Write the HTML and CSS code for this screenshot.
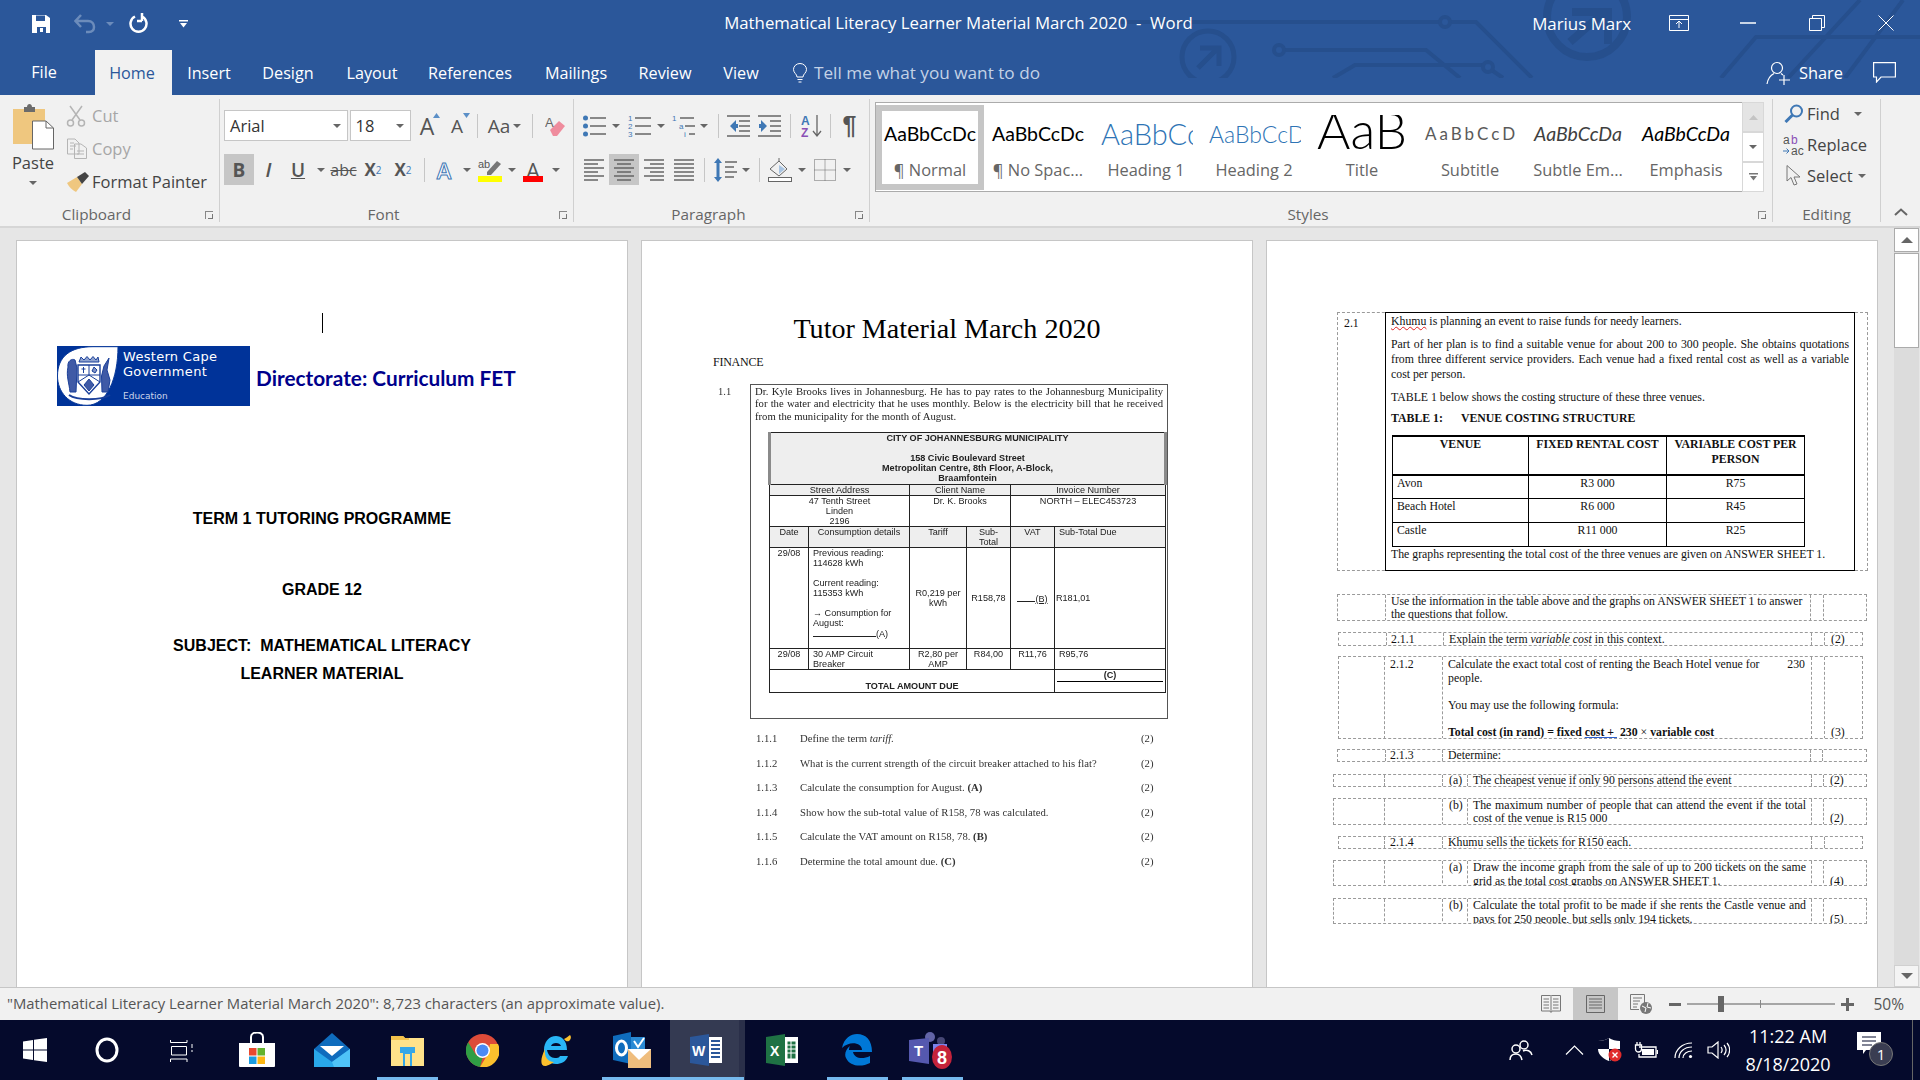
FILE: index.html
```html
<!DOCTYPE html>
<html lang="en">
<head>
<meta charset="utf-8">
<title>Mathematical Literacy Learner Material March 2020 - Word</title>
<link rel="stylesheet" href="styles.css">
</head>
<body>
<div class="app">
  <header class="top">
    <svg class="circuit" width="820" height="78" viewBox="1100 0 820 78" fill="none" stroke="#264f8d" stroke-width="4">
      <path d="M1100 22H1440M1450 22H1476L1532 78M1284 50H1426L1460 78M1333 78L1355 65H1483M1493 71L1503 78"/>
      <circle cx="1445" cy="22" r="5"/><circle cx="1279" cy="50" r="5"/><circle cx="1488" cy="67" r="5"/>
      <circle cx="1587" cy="17" r="40" stroke-width="8"/>
      <path d="M1570 42L1602 14M1572 12H1608V44" stroke-width="8"/>
      <circle cx="1208" cy="57" r="26" stroke-width="5"/>
      <path d="M1198 68L1216 50M1200 48H1219V66" stroke-width="5"/>
      <path d="M1721 78L1756 37H1920M1788 78L1860 0M1845 78L1903 0"/>
    </svg>
    <div class="titlebar">
      <div class="qat">
        <span class="b w38"><svg width="20" height="20" viewBox="0 0 20 20"><path d="M1 1H15L19 4V19H1Z" fill="#fff"/><path d="M5 1.500H14V7H5ZM6 13H15V19H6Z" fill="#2b579a"/><path d="M9 14H12V18H9Z" fill="#fff"/></svg></span>
        <span class="b w30 ml10"><svg width="22" height="20" viewBox="0 0 22 20" fill="none" stroke="#6c8cbb" stroke-width="2.500"><path d="M2 7H14C18 7 20 10 20 13C20 16 18 18 15 18H12M7 1L1.500 7L7 13"/></svg></span>
        <span class="b w20"><i class="arr dim"></i></span>
        <span class="b w30 ml4"><svg width="20" height="22" viewBox="0 0 20 22" fill="none" stroke="#fff" stroke-width="2.500"><path d="M13 3.500A8 8 0 1 1 6 3.500M13 0V8M13 8H8" /></svg></span>
        <span class="b w30 ml14"><svg width="9" height="8" viewBox="0 0 9 8"><path d="M0 0H9V1.500H0ZM1 3H8L4.500 7.500Z" fill="#fff"/></svg></span>
      </div>
      <div class="doc-title">Mathematical Literacy Learner Material March 2020&nbsp; -&nbsp; Word</div>
      <div class="win">
        <span class="user">Marius Marx</span>
        <span class="b w69"><svg width="20" height="16" viewBox="0 0 20 16" fill="none" stroke="#fff"><path d="M.5.500H19.500V15.500H.5ZM.5 4.500H19.500M10 13V6.500M7 9L10 6L13 9"/></svg></span>
        <span class="b w69"><svg width="16" height="2" viewBox="0 0 16 2"><path d="M0 1H16" stroke="#fff" stroke-width="1.500"/></svg></span>
        <span class="b w69"><svg width="16" height="16" viewBox="0 0 16 16" fill="none" stroke="#fff"><path d="M.5 3.500H12.500V15.500H.5ZM3.500 3.500V.5H15.500V12.500H12.500"/></svg></span>
        <span class="b w69"><svg width="16" height="16" viewBox="0 0 16 16" fill="none" stroke="#fff"><path d="M.5.5L15.500 15.500M15.500.5L.5 15.500"/></svg></span>
      </div>
    </div>
    <nav class="tabs">
      <div class="tabgrid">
        <span class="tab tab-file">File</span>
        <span class="tab tab-on">Home</span>
        <span class="tab">Insert</span>
        <span class="tab">Design</span>
        <span class="tab">Layout</span>
        <span class="tab">References</span>
        <span class="tab">Mailings</span>
        <span class="tab">Review</span>
        <span class="tab">View</span>
      </div>
      <div class="tellme">
        <svg width="16" height="20" viewBox="0 0 16 20" fill="none" stroke="#fff"><path d="M5 14C5 11 1.500 10 1.500 6.500A6.500 6 0 0 1 14.500 6.500C14.500 10 11 11 11 14ZM5.500 16.500H10.500M6.500 19H9.500"/></svg>
        <span>Tell me what you want to do</span>
      </div>
      <div class="share">
        <svg width="24" height="24" viewBox="0 0 24 24" fill="none" stroke="#fff" stroke-width="1.200"><circle cx="11" cy="7" r="5.500"/><path d="M1 23C2 17 5 14 8 12.500M15 12.500L17 14M18 14V24M13 19H24"/></svg>
        <span class="share-t">Share</span>
        <svg class="cmt" width="23" height="21" viewBox="0 0 23 21" fill="none" stroke="#fff" stroke-width="1.200"><path d="M.6.6H22.400V15H8L3.500 20V15H.6Z"/></svg>
      </div>
    </nav>
  </header>

  <section class="ribbon">
    <div class="group g-clip">
      <div class="clip-body">
        <div class="paste">
          <svg width="42" height="47" viewBox="0 0 42 47"><path d="M1 6H33V41H1Z" fill="#efc77f" rx="2"/><path d="M12 4H15C15 0 20 0 20 4H23V9H12Z" fill="#6b6b6b"/><path d="M20.500 18H34L41.500 25V46H20.500Z" fill="#fff" stroke="#666"/><path d="M34 18V25H41.500" fill="none" stroke="#666"/></svg>
          <span class="paste-t">Paste</span>
          <i class="arr mt8"></i>
        </div>
        <div class="clip-list">
          <div class="cl off"><span class="cl-i"><svg width="20" height="22" viewBox="0 0 20 22" fill="none" stroke="#b5b5b5" stroke-width="1.500"><path d="M4 1L14 15M16 1L6 15"/><circle cx="4.500" cy="18" r="3"/><circle cx="15.500" cy="18" r="3"/></svg></span>Cut</div>
          <div class="cl off"><span class="cl-i"><svg width="22" height="21" viewBox="0 0 22 21" fill="none" stroke="#b5b5b5"><path d="M1.500 1H9L13 5V16H1.500ZM8.500 6H15L20.500 10V20.500H8.500ZM4 5H8M4 8H10M4 11H7M11 13H18M11 16H18"/></svg></span>Copy</div>
          <div class="cl"><span class="cl-i"><svg width="24" height="22" viewBox="0 0 24 22"><path d="M1 12L11 6L16 13L10 21C6 19 3 16 1 12Z" fill="#efc77f"/><path d="M11 6L19 1L23 5L16 13Z" fill="#444"/></svg></span>Format Painter</div>
        </div>
      </div>
      <div class="glabel gl-pad">Clipboard<i class="launch"></i></div>
    </div>

    <div class="group g-font">
      <div class="rows">
        <div class="row">
          <span class="combo c-font">Arial<i class="arr"></i></span>
          <span class="combo c-size">18<i class="arr"></i></span>
          <span class="b w30 big">A<svg class="sup" width="7" height="5" viewBox="0 0 7 5"><path d="M0 5L3.500 0L7 5Z" fill="#5b8fc7"/></svg></span>
          <span class="b w30 big sm">A<svg class="sup" width="7" height="5" viewBox="0 0 7 5"><path d="M0 0L3.500 5L7 0Z" fill="#5b8fc7"/></svg></span>
          <span class="b w10"><i class="sep"></i></span>
          <span class="b w45 aa">Aa<i class="arr ml3"></i></span>
          <span class="b w10"><i class="sep"></i></span>
          <span class="b w36"><svg width="20" height="22" viewBox="0 0 20 22"><path d="M5 15L14 6L20 11L12 21H8Z" fill="#ef8c9d"/><text x="0" y="12" font-family="Liberation Sans" font-size="13" fill="#666">A</text></svg></span>
        </div>
        <div class="row">
          <span class="b w30 on fmt bold">B</span>
          <span class="b w29 fmt ital">I</span>
          <span class="b w30 fmt under">U</span>
          <span class="b w16"><i class="arr"></i></span>
          <span class="b w29 fmt abc">abc</span>
          <span class="b w30 fmt xs">X<sub>2</sub></span>
          <span class="b w30 fmt xs">X<sup>2</sup></span>
          <span class="b w12"><i class="sep"></i></span>
          <span class="b w28 fx">A</span>
          <span class="b w17"><i class="arr"></i></span>
          <span class="b w30"><svg width="26" height="24" viewBox="0 0 26 24"><text x="1" y="10" font-family="Liberation Sans" font-size="11" fill="#555">ab</text><path d="M10 14L20 3L24 6L14 17L10 17Z" fill="#777"/><rect x="1" y="18" width="24" height="6" fill="#ff0"/></svg></span>
          <span class="b w13"><i class="arr"></i></span>
          <span class="b w30 colorA">A</span>
          <span class="b w16"><i class="arr"></i></span>
        </div>
      </div>
      <div class="glabel gl-pad">Font<i class="launch"></i></div>
    </div>

    <div class="group g-para">
      <div class="rows">
        <div class="row r-ind">
          <span class="b w23"><svg width="23" height="22" viewBox="0 0 23 22" fill="none" stroke="#666" stroke-width="1.500"><path d="M7 3H23M7 11H23M7 19H23"/><circle cx="2.500" cy="3" r="2.500" fill="#3f78b5" stroke="none"/><circle cx="2.500" cy="11" r="2.500" fill="#3f78b5" stroke="none"/><circle cx="2.500" cy="19" r="2.500" fill="#3f78b5" stroke="none"/></svg></span>
          <span class="b w20"><i class="arr"></i></span>
          <span class="b w27"><svg width="23" height="22" viewBox="0 0 23 22" fill="none"><path d="M7 3H23M7 11H23M7 19H23" stroke="#666" stroke-width="1.500"/><text x="0" y="6" class="mini">1</text><text x="0" y="14" class="mini">2</text><text x="0" y="22" class="mini">3</text></svg></span>
          <span class="b w16"><i class="arr"></i></span>
          <span class="b w30"><svg width="24" height="22" viewBox="0 0 24 22" fill="none"><path d="M8 3H22M13 11H23M17 19H23" stroke="#666" stroke-width="1.500"/><text x="0" y="6" class="mini">1</text><text x="7" y="14" class="mini">a</text><text x="12" y="22" class="mini">i</text></svg></span>
          <span class="b w10"><i class="arr"></i></span>
          <span class="b w18"><i class="sep"></i></span>
          <span class="b w31 jl"><svg width="23" height="22" viewBox="0 0 23 22" fill="none" stroke="#666" stroke-width="1.500"><path d="M0 1H23M12 6H23M12 11H23M12 16H23M0 21H23"/><path d="M9 5L3 11L9 17V13H11V9H9Z" fill="#3f78b5" stroke="none"/></svg></span>
          <span class="b w23"><svg width="23" height="22" viewBox="0 0 23 22" fill="none" stroke="#666" stroke-width="1.500"><path d="M0 1H23M12 6H23M12 11H23M12 16H23M0 21H23"/><path d="M3 5L9 11L3 17V13H1V9H3Z" fill="#3f78b5" stroke="none"/></svg></span>
          <span class="b w18"><i class="sep"></i></span>
          <span class="b w25"><svg width="22" height="24" viewBox="0 0 22 24" fill="none"><text x="0" y="11" font-family="Liberation Sans" font-weight="700" font-size="12" fill="#3f78b5">A</text><text x="0" y="23" font-family="Liberation Sans" font-weight="700" font-size="12" fill="#8a4fb5">Z</text><path d="M16 1V21M12 17L16 22L20 17" stroke="#666" stroke-width="1.300"/></svg></span>
          <span class="b w12"><i class="sep"></i></span>
          <span class="b w27 pil">¶</span>
        </div>
        <div class="row">
          <span class="b w30"><svg width="20" height="22" viewBox="0 0 20 22" fill="none" stroke="#666" stroke-width="1.300"><path d="M0 1H20M0 5H14M0 9H20M0 13H14M0 17H20M0 21H14"/></svg></span>
          <span class="b w30 on"><svg width="20" height="22" viewBox="0 0 20 22" fill="none" stroke="#666" stroke-width="1.300"><path d="M0 1H20M3 5H17M0 9H20M3 13H17M0 17H20M3 21H17"/></svg></span>
          <span class="b w29"><svg width="20" height="22" viewBox="0 0 20 22" fill="none" stroke="#666" stroke-width="1.300"><path d="M0 1H20M6 5H20M0 9H20M6 13H20M0 17H20M6 21H20"/></svg></span>
          <span class="b w31"><svg width="20" height="22" viewBox="0 0 20 22" fill="none" stroke="#666" stroke-width="1.300"><path d="M0 1H20M0 5H20M0 9H20M0 13H20M0 17H20M0 21H20"/></svg></span>
          <span class="b w10"><i class="sep"></i></span>
          <span class="b w32"><svg width="23" height="24" viewBox="0 0 23 24" fill="none"><path d="M11 4H23M11 9H20M11 14H23M11 19H20" stroke="#666" stroke-width="1.300"/><path d="M4 0L8 5H5.500V19H8L4 24L0 19H2.500V5H0Z" fill="#3f78b5"/></svg></span>
          <span class="b w10"><i class="arr"></i></span>
          <span class="b w16"><i class="sep"></i></span>
          <span class="b w26"><svg width="24" height="24" viewBox="0 0 24 24" fill="none" stroke="#666"><path d="M2 11L11 3L19 11L11 18ZM11 3V0"/><path d="M11 7L17 11L11 16Z" fill="#a8c4e2" stroke="none"/><rect x=".5" y="19.500" width="23" height="4" fill="#fff"/></svg></span>
          <span class="b w18"><i class="arr"></i></span>
          <span class="b w28"><svg width="22" height="22" viewBox="0 0 22 22" fill="none" stroke="#666" stroke-dasharray="1 1"><path d="M.5.5H21.500V21.500H.5ZM11 .5V21.500M.5 11H21.500"/></svg></span>
          <span class="b w16"><i class="arr"></i></span>
        </div>
      </div>
      <div class="glabel gl-pad">Paragraph<i class="launch"></i></div>
    </div>

    <div class="group g-styles">
      <div class="gallery">
        <div class="style sel"><div class="pv pv-n">AaBbCcDc</div><div class="sl">¶ Normal</div></div>
        <div class="style"><div class="pv pv-n">AaBbCcDc</div><div class="sl">¶ No Spac...</div></div>
        <div class="style"><div class="pv pv-h1">AaBbCc</div><div class="sl">Heading 1</div></div>
        <div class="style"><div class="pv pv-h2">AaBbCcD</div><div class="sl">Heading 2</div></div>
        <div class="style"><div class="pv pv-t">AaB</div><div class="sl sl-t">Title</div></div>
        <div class="style"><div class="pv pv-s">AaBbCcD</div><div class="sl">Subtitle</div></div>
        <div class="style"><div class="pv pv-e1">AaBbCcDa</div><div class="sl">Subtle Em...</div></div>
        <div class="style"><div class="pv pv-e2">AaBbCcDa</div><div class="sl">Emphasis</div></div>
        <div class="gscroll">
          <span class="gs gs-up"><svg width="9" height="5" viewBox="0 0 9 5"><path d="M0 5L4.500 0L9 5Z" fill="#c4c4c4"/></svg></span>
          <span class="gs"><i class="arr"></i></span>
          <span class="gs gs-more"><svg width="9" height="8" viewBox="0 0 9 8"><path d="M0 0H9V1.500H0ZM1 3H8L4.500 7.500Z" fill="#777"/></svg></span>
        </div>
      </div>
      <div class="glabel gl-pad">Styles<i class="launch"></i></div>
    </div>

    <div class="group g-edit">
      <div class="edit-list">
        <div class="ed"><span class="ed-i"><svg width="20" height="19" viewBox="0 0 20 19" fill="none" stroke="#3f78b5" stroke-width="2"><circle cx="12.500" cy="7" r="5.500"/><path d="M8.500 11L1.500 18" stroke-width="3"/></svg></span>Find<i class="arr ml-ed1"></i></div>
        <div class="ed"><span class="ed-i"><svg width="24" height="22" viewBox="0 0 24 22"><text x="1" y="10" font-family="Liberation Sans" font-size="12" fill="#555">a</text><text x="9" y="10" font-family="Liberation Sans" font-size="12" fill="#8a4fb5">b</text><text x="9" y="21" font-family="Liberation Sans" font-size="12" fill="#555">ac</text><path d="M1 17H7M4.500 14.500L7 17L4.500 19.500" stroke="#3f78b5" fill="none"/></svg></span>Replace</div>
        <div class="ed"><span class="ed-i"><svg width="15" height="21" viewBox="0 0 15 21" fill="none" stroke="#777"><path d="M1 .5V16L5 12.500L8 20L11 19L8 12H14Z"/></svg></span>Select<i class="arr ml-ed2"></i></div>
      </div>
      <div class="glabel">Editing</div>
    </div>
    <div class="collapse"><svg width="14" height="8" viewBox="0 0 14 8" fill="none" stroke="#666" stroke-width="2"><path d="M1 7L7 1.500L13 7"/></svg></div>
  </section>

  <main class="docarea">
    <article class="page p1">
      <i class="caret"></i>
      <div class="brand">
        <div class="logo">
          <svg class="crest" width="62" height="60" viewBox="0 0 62 60">
            <path d="M.5 30C.5 10 14 .7 36 .7H61C61 32 50 59.300 30 59.300C12 59.300.5 46 .5 30Z" fill="#fff" stroke="#0a3a9a"/>
            <g fill="none" stroke="#1a3f99" stroke-width="1">
              <path d="M21 19H43V36L32 48L21 36Z" stroke-width="1.400"/>
              <path d="M32 19V29M21 29H43M21 36L32 29L43 36"/>
              <path d="M26.500 21V27M24.500 23H28.500"/>
              <path d="M35 25L37 21L40 24L38 27Z" fill="#7f92c6"/>
              <path d="M32 33L37 39L32 45L27 39Z" fill="#3f5aa6"/>
              <path d="M22 16L24 11L27 14L30 10.500L33 14L36 10.500L39 14L41 11L42 16Z" fill="#8ea2cf"/>
              <path d="M11 21C10 15 15 12 18 14L20 22L19 46L13 46C12 36 9 30 11 21Z" fill="#3f5aa6"/>
              <path d="M52 12L47 20L44.500 30L45 46L51 46L53 34L50 24Z" fill="#3f5aa6"/>
              <path d="M12 49C20 54.500 44 54.500 53 49" stroke-width="2"/>
            </g>
          </svg>
          <div class="logo-t">
            <span class="l-w">Western Cape<br>Government</span>
            <span class="l-e">Education</span>
          </div>
        </div>
        <div class="direct">Directorate: Curriculum FET</div>
      </div>
      <p class="cv cv1">TERM 1 TUTORING PROGRAMME</p>
      <p class="cv cv2">GRADE 12</p>
      <p class="cv cv3">SUBJECT:&nbsp; MATHEMATICAL LITERACY</p>
      <p class="cv cv4">LEARNER MATERIAL</p>
    </article>

    <article class="page p2">
      <h1 class="p2-title">Tutor Material March 2020</h1>
      <div class="p2-body">
        <div class="finance">FINANCE</div>
        <div class="scan">
          <div class="q11">
            <span class="q11n">1.1</span>
            <div class="qbox">
              <p class="qtext"><span class="jline">Dr. Kyle Brooks lives in Johannesburg. He has to pay rates to the Johannesburg Municipality</span><span class="jline">for the water and electricity that he uses monthly. Below is the electricity bill that he received</span><span class="nline">from the municipality for the month of August.</span></p>
              <table class="bill">
                <colgroup><col class="c1"><col class="c2"><col class="c3"><col class="c4"><col class="c5"><col class="c6"></colgroup>
                <tr class="h52 shade"><td colspan="6" class="ctr b-h thickl"><span class="bill-city">CITY OF JOHANNESBURG MUNICIPALITY</span><br><br>158 Civic Boulevard Street<br>Metropolitan Centre, 8th Floor, A-Block,<br>Braamfontein</td></tr>
                <tr class="h11 shade"><td colspan="2" class="ctr">Street Address</td><td colspan="2" class="ctr">Client Name</td><td colspan="2" class="ctr">Invoice Number</td></tr>
                <tr class="h32"><td colspan="2" class="ctr">47 Tenth Street<br>Linden<br>2196</td><td colspan="2" class="ctr">Dr. K. Brooks</td><td colspan="2" class="ctr">NORTH – ELEC453723</td></tr>
                <tr class="h20 shade"><td class="ctr">Date</td><td class="ctr">Consumption details</td><td class="ctr">Tariff</td><td class="ctr">Sub-<br>Total</td><td class="ctr">VAT</td><td>Sub-Total Due</td></tr>
                <tr class="h103"><td class="ctr">29/08</td><td>Previous reading:<br>114628 kWh<br><br>Current reading:<br>115353 kWh<br><br>→ Consumption for<br>August:<br><i class="blank"></i>(A)</td><td class="ctr mid">R0,219 per<br>kWh</td><td class="ctr mid">R158,78</td><td class="ctr mid"><i class="blankb"></i><u>(B)</u></td><td class="mid">R181,01</td></tr>
                <tr class="h21"><td class="ctr">29/08</td><td>30 AMP Circuit<br>Breaker</td><td class="ctr">R2,80 per<br>AMP</td><td class="ctr">R84,00</td><td class="ctr">R11,76</td><td>R95,76</td></tr>
                <tr class="h23"><td colspan="5" class="ctr bot bold-t">TOTAL AMOUNT DUE</td><td class="ctr c-due">(C)</td></tr>
              </table>
            </div>
          </div>
          <div class="qlist">
            <span>1.1.1</span><span>Define the term <em>tariff.</em></span><span>(2)</span>
            <span>1.1.2</span><span>What is the current strength of the circuit breaker attached to his flat?</span><span>(2)</span>
            <span>1.1.3</span><span>Calculate the consumption for August. <b>(A)</b></span><span>(2)</span>
            <span>1.1.4</span><span>Show how the sub-total value of R158, 78 was calculated.</span><span>(2)</span>
            <span>1.1.5</span><span>Calculate the VAT amount on R158, 78. <b>(B)</b></span><span>(2)</span>
            <span>1.1.6</span><span>Determine the total amount due. <b>(C)</b></span><span>(2)</span>
          </div>
        </div>
      </div>
    </article>

    <article class="page p3">
      <div class="q21">
        <span class="q21n">2.1</span>
        <div class="q21box">
          <p class="t1"><span class="sq">Khumu</span> is planning an event to raise funds for needy learners.</p>
          <p class="t2">Part of her plan is to find a suitable venue for about 200 to 300 people. She obtains quotations from three different service providers. Each venue had a fixed rental cost as well as a variable cost per person.</p>
          <p class="t2">TABLE 1 below shows the costing structure of these three venues.</p>
          <p class="t3"><b>TABLE 1:</b><b class="t3b">VENUE COSTING STRUCTURE</b></p>
          <table class="venue">
            <colgroup><col class="vc1"><col class="vc2"><col class="vc3"></colgroup>
            <tr class="vh"><th>VENUE</th><th>FIXED RENTAL COST</th><th>VARIABLE COST PER PERSON</th></tr>
            <tr class="vr"><td class="vl">Avon</td><td>R3 000</td><td>R75</td></tr>
            <tr class="vr"><td class="vl">Beach Hotel</td><td>R6 000</td><td>R45</td></tr>
            <tr class="vr"><td class="vl">Castle</td><td>R11 000</td><td>R25</td></tr>
          </table>
          <p class="t1">The graphs representing the total cost of the three venues are given on ANSWER SHEET 1.</p>
        </div>
      </div>

      <div class="dr dA h27 mt23"><span></span><span class="ptx">Use the information in the table above and the graphs on ANSWER SHEET 1 to answer the questions that follow.</span><span></span><span></span></div>
      <div class="dr dB h14 mt11"><span></span><span class="px">2.1.1</span><span class="ptx2">Explain the term <em>variable cost</em> in this context.</span><span></span><span class="mk">(2)</span></div>
      <div class="dr dC h83 mt10"><span></span><span class="px2">2.1.2</span><span class="ptx2"><span class="spread"><span>Calculate the exact total cost of renting the Beach Hotel venue for</span><span>230</span></span>people.<br><span class="gap13">You may use the following formula:</span><br><span class="gap13"><b>Total cost (in rand) = fixed <u class="blu">cost&nbsp;+&nbsp;</u> 230</b> × <b>variable cost</b></span></span><span></span><span class="mk mkb">(3)</span></div>
      <div class="dr dD h13 mt10"><span></span><span class="px">2.1.3</span><span class="ptx2">Determine:</span><span></span><span></span></div>
      <div class="dr dE h13 mt12"><span></span><span></span><span class="pa">(a)</span><span class="ptx3">The cheapest venue if only 90 persons attend the event</span><span></span><span class="mk">(2)</span></div>
      <div class="dr dE h27 mt11"><span></span><span></span><span class="pa">(b)</span><span class="ptx3">The maximum number of people that can attend the event if the total cost of the venue is R15 000</span><span></span><span class="mk mkb">(2)</span></div>
      <div class="dr dF h13 mt11"><span></span><span class="px2">2.1.4</span><span class="ptx2"><span class="sq">Khumu</span> sells the tickets for R150 each.</span><span></span><span></span></div>
      <div class="dr dE h26 mt11"><span></span><span></span><span class="pa">(a)</span><span class="ptx3">Draw the income graph from the sale of up to 200 tickets on the same grid as the total cost graphs on ANSWER SHEET 1.</span><span></span><span class="mk mkb">(4)</span></div>
      <div class="dr dE h26 mt12"><span></span><span></span><span class="pa">(b)</span><span class="ptx3">Calculate the total profit to be made if she rents the Castle venue and pays for 250 people, but sells only 194 tickets.</span><span></span><span class="mk mkb">(5)</span></div>
    </article>

    <aside class="vscroll">
      <span class="vbtn"><svg width="12" height="6" viewBox="0 0 12 6"><path d="M0 6L6 0L12 6Z" fill="#666"/></svg></span>
      <span class="vthumb"></span>
      <span class="vtrack"></span>
      <span class="vbtn"><svg width="12" height="6" viewBox="0 0 12 6"><path d="M0 0L6 6L12 0Z" fill="#666"/></svg></span>
    </aside>
  </main>

  <footer class="status">
    <span class="st-text">"Mathematical Literacy Learner Material March 2020": 8,723 characters (an approximate value).</span>
    <div class="st-right">
      <span class="b v-btn v-read"><svg width="20" height="18" viewBox="0 0 20 18" fill="none" stroke="#777"><path d="M.5.5H9.500L10 1.500L10.500.5H19.500V16H11L10 17.500L9 16H.5ZM10 2V16M2.500 4H8M2.500 7H8M2.500 10H8M2.500 13H8M12 4H17.500M12 7H17.500M12 10H17.500M12 13H17.500"/></svg></span>
      <span class="b v-btn on"><svg width="20" height="18" viewBox="0 0 20 18" fill="none" stroke="#666"><path d="M.5.5H18.500V17.500H.5ZM3 4H16M3 7H16M3 10H16M3 13H16"/></svg></span>
      <span class="b v-btn"><svg width="22" height="20" viewBox="0 0 22 20" fill="none" stroke="#777"><path d="M.5.5H14.500V13M9 15.500H.5V.5M3 4H12M3 7H10M3 10H8M3 13H7"/><circle cx="16" cy="14" r="6" fill="#777" stroke="none"/><path d="M12 12L16 14L15 18M18 9L17 13L21 14" stroke="#fff"/></svg></span>
      <span class="b w24 zm"><svg width="12" height="3" viewBox="0 0 12 3"><path d="M0 0H12V3H0Z" fill="#666"/></svg></span>
      <div class="slider"><i class="tick"></i><i class="thumb"></i></div>
      <span class="b w24 zm"><svg width="13" height="13" viewBox="0 0 13 13"><path d="M5 0H8V5H13V8H8V13H5V8H0V5H5Z" fill="#666"/></svg></span>
      <span class="pct">50%</span>
    </div>
  </footer>

  <footer class="taskbar">
    <div class="tb-left">
      <span class="tk"><svg width="24" height="24" viewBox="0 0 24 24" fill="#fff"><path d="M0 3.500L10 2V11.500H0ZM11 1.800L24 0V11.500H11ZM0 12.500H10V22L0 20.500ZM11 12.500H24V24L11 22.200Z"/></svg></span>
      <span class="tk"><svg width="24" height="26" viewBox="0 0 24 26" fill="none" stroke="#fff" stroke-width="3"><ellipse cx="12" cy="13" rx="10" ry="11"/></svg></span>
      <span class="tk"><svg width="24" height="24" viewBox="0 0 24 24" fill="none" stroke="#fff"><path d="M.5 2V4.500H17V2M1.500 8.500H16.500V17H1.500ZM.5 24V21H17V24M22 6V10M22 12V14" /></svg></span>
      <span class="tk"><svg width="36" height="36" viewBox="0 0 36 36"><path d="M12 11V5C12-1 24-1 24 5V11" fill="none" stroke="#fff" stroke-width="2"/><path d="M0 11H36V34Q36 35 35 35H1Q0 35 0 34Z" fill="#fff"/><path d="M10 16H17.500V23.500H10Z" fill="#e8492f"/><path d="M18.500 16H26V23.500H18.500Z" fill="#63b32e"/><path d="M10 24.500H17.500V32H10Z" fill="#1a9ce0"/><path d="M18.500 24.500H26V32H18.500Z" fill="#fdb714"/></svg></span>
      <span class="tk"><svg width="36" height="34" viewBox="0 0 36 34"><path d="M18 0L36 16V34H0V16Z" fill="#0f6cbd"/><path d="M0 16L18 29L36 16V34H0Z" fill="#29a8ea"/><path d="M6 13H30L18 23Z" fill="#fff"/><path d="M18 29L36 16V34H20Z" fill="#4fc3f7"/></svg></span>
      <span class="tk"><svg width="33" height="32" viewBox="0 0 33 32"><path d="M0 2H12L14 4H33V32H0Z" fill="#ffe28a"/><path d="M0 2H12L14 4H18V6H0Z" fill="#f3c24c"/><path d="M9 13H24V19H21V32H12V19H9Z" fill="#35a7e8"/><path d="M14 20H19V32H14Z" fill="#ffe28a"/></svg></span>
      <span class="tk"><svg width="33" height="33" viewBox="0 0 33 33"><circle cx="16.500" cy="16.500" r="16.500" fill="#dd4b39"/><path d="M16.500 33A16.500 16.500 0 0 1 2.200 8.200L10 21L16.500 24L14 33Z" fill="#2f9e44"/><path d="M32 10A16.500 16.500 0 0 1 14 33L22 20L24 10Z" fill="#fbc02d"/><circle cx="16.500" cy="16.500" r="7.500" fill="#fff"/><circle cx="16.500" cy="16.500" r="6" fill="#4a8af4"/></svg></span>
      <span class="tk"><svg width="34" height="34" viewBox="0 0 34 34"><path d="M7 17H27C27 7 21 3 16 3C9 3 4 9 4 17C4 26 9 31 16 31C21 31 26 29 28 23H20C19 25 17 25 15 25C11 25 8 22 7 17Z" fill="#29b6f6"/><path d="M11 13H21C20 9 12 9 11 13Z" fill="#050a2c"/><path d="M30 2C33 5 28 12 24 6C27 5 28 3 30 2ZM5 16C0 26 0 34 6 33C10 32 12 30 14 29C8 29 4 24 5 16Z" fill="#fbc02d"/></svg></span>
      <span class="tk"><svg width="38" height="36" viewBox="0 0 38 36"><path d="M0 4L18 0V32L0 28Z" fill="#0f6cbd"/><path d="M18 5H32V20H18Z" fill="#2a8ad4"/><path d="M21 9L25 15L31 6" fill="none" stroke="#fff" stroke-width="2"/><ellipse cx="8.500" cy="16" rx="5" ry="7" fill="none" stroke="#fff" stroke-width="3"/><path d="M15 17H38V36H15Z" fill="#efbd7d"/><path d="M15 17L26 28L38 17" fill="#fff"/></svg></span>
      <span class="tk tk-word"><svg width="32" height="32" viewBox="0 0 32 32"><path d="M0 3L19 0V32L0 29Z" fill="#2b579a"/><path d="M19 3H32V29H19Z" fill="#fff"/><path d="M21 7H30M21 11H30M21 15H30M21 19H30M21 23H30" stroke="#2b579a" stroke-width="2"/><text x="2" y="22" font-family="Liberation Sans" font-weight="700" font-size="14" fill="#fff">W</text></svg></span>
      <span class="tk"><svg width="32" height="32" viewBox="0 0 32 32"><path d="M0 3L19 0V32L0 29Z" fill="#1f7244"/><path d="M19 3H32V29H19Z" fill="#fff"/><path d="M21 7H30V25H21ZM21 11H30M21 15H30M21 19H30M25 7V25" fill="#1f7244" stroke="#fff"/><text x="4" y="22" font-family="Liberation Sans" font-weight="700" font-size="14" fill="#fff">X</text></svg></span>
      <span class="tk"><svg width="30" height="32" viewBox="0 0 30 32"><path d="M0 14C2 4 9 0 15 0C24 0 30 6 30 18H11C12 24 20 26 28 22V29C20 33 8 33 4 24C2 20 4 15 8 12C7 14 7 15 7 16H20C20 9 8 6 0 14Z" fill="#0078d7"/></svg></span>
      <span class="tk"><svg width="46" height="38" viewBox="0 0 46 38"><circle cx="21" cy="6" r="5" fill="#6264a7"/><circle cx="32" cy="10" r="4" fill="#464775"/><path d="M24 13H38V28H24Z" fill="#7b83eb"/><path d="M0 9L20 7V33L0 30Z" fill="#5558af"/><text x="5" y="25" font-family="Liberation Sans" font-weight="700" font-size="15" fill="#fff">T</text><ellipse cx="33" cy="26" rx="10" ry="12" fill="#c4233b"/><text x="28" y="33" font-family="Liberation Sans" font-weight="700" font-size="18" fill="#fff">8</text></svg></span>
      <i class="ul ul-a"></i><i class="ul ul-b"></i><i class="ul ul-c"></i><i class="ul ul-d"></i><i class="ul ul-e"></i>
    </div>
    <div class="tray">
      <span class="tr w-people"><svg width="24" height="22" viewBox="0 0 24 22" fill="none" stroke="#fff" stroke-width="1.500"><circle cx="15" cy="6" r="4"/><circle cx="7" cy="10" r="4"/><path d="M1 21C1 16 4 15 7 15C10 15 12 16 13 21M14 12C18 10 22 12 23 16"/></svg></span>
      <span class="tr w-chev"><svg width="19" height="10" viewBox="0 0 19 10" fill="none" stroke="#fff" stroke-width="1.200"><path d="M1 9.500L9.500 1L18 9.500"/></svg></span>
      <span class="tr w-shield"><svg width="24" height="24" viewBox="0 0 24 24"><path d="M11 0C14 2 18 3 22 3V11C22 17 16 21 11 23C6 21 0 17 0 11V3C4 3 8 2 11 0Z" fill="#fff"/><path d="M11 0V11H0V3C4 3 8 2 11 0ZM11 11H22C22 13 21 16 18 18L11 23Z" fill="#050a2c"/><circle cx="17" cy="17" r="6.500" fill="#e02b2b"/><path d="M14.500 14.500L19.500 19.500M19.500 14.500L14.500 19.500" stroke="#fff" stroke-width="1.400"/></svg></span>
      <span class="tr w-bat"><svg width="24" height="16" viewBox="0 0 24 16" fill="none" stroke="#fff" stroke-width="1.300"><path d="M5 5H22V15H5V12M23.500 8V12M3 0V3M6 0V3M1.500 3H7.500V7C7.500 9 6 10 4.500 10C3 10 1.500 9 1.500 7Z"/><path d="M8 7H20V13H8Z" fill="#fff" stroke="none"/></svg></span>
      <span class="tr w-wifi"><svg width="20" height="18" viewBox="0 0 20 18" fill="none" stroke="#fff" stroke-width="1.200"><path d="M1 17C1 9 8 2 18 2M5 17C5 11 10 6 18 6M9 17C9 13 13 10 18 10"/><circle cx="16.500" cy="15.500" r="1.600" fill="#fff" stroke="none"/></svg></span>
      <span class="tr w-vol"><svg width="23" height="18" viewBox="0 0 23 18" fill="none" stroke="#fff" stroke-width="1.200"><path d="M1 6H5L11 1V17L5 12H1ZM14 6C15.500 8 15.500 10 14 12M17 4C19.500 7 19.500 11 17 14M20 2C23.500 6 23.500 12 20 16"/></svg></span>
      <div class="clock"><span>11:22 AM</span><span>8/18/2020</span></div>
      <span class="action"><svg width="26" height="26" viewBox="0 0 26 26"><path d="M0 0H24V18H9L6 22V18H0Z" fill="#fff"/><path d="M5 5H19M5 9H19M5 13H15" stroke="#050a2c" stroke-width="1.200"/></svg><span class="badge">1</span></span>
      <i class="showdesk"></i>
    </div>
  </footer>
</div>
</body>
</html>
```
FILE: styles.css
```css
* { box-sizing: border-box; }
html, body { margin: 0; padding: 0; }
body { width: 1920px; height: 1080px; overflow: hidden; font-family: "Open Sans", "Liberation Sans", sans-serif; background: #e6e6e6; }
i { font-style: normal; display: block; }
p { margin: 0; }
.app { width: 1920px; height: 1080px; display: flex; flex-direction: column; }

/* helpers */
.b { display: flex; align-items: center; justify-content: center; flex: none; height: 100%; }
.w10{width:10px}.w12{width:12px}.w13{width:13px}.w16{width:16px}.w17{width:17px}.w18{width:18px}.w20{width:20px}.w23{width:23px}.w24{width:24px}.w25{width:25px}.w26{width:26px}.w27{width:27px}.w28{width:28px}.w29{width:29px}.w30{width:30px}.w31{width:31px}.w32{width:32px}.w36{width:36px}.w38{width:38px}.w45{width:45px}.w69{width:69px}
.ml4{margin-left:4px}.ml10{margin-left:10px}.ml14{margin-left:14px}.ml3{margin-left:3px}
.arr { width: 0; height: 0; border-left: 4px solid transparent; border-right: 4px solid transparent; border-top: 4px solid #666; flex: none; }
.arr.dim { border-top-color: #6c8cbb; }
.sep { width: 1px; height: 24px; background: #c6c6c6; }
.on { background: #c6c6c6; }
.mt8 { margin-top: 8px; }

/* title area */
.top { position: relative; height: 95px; background: #2b579a; flex: none; color: #fff; }
.circuit { position: absolute; left: 1100px; top: 0; }
.titlebar { position: relative; height: 50px; display: grid; grid-template-columns: 1fr auto 1fr; align-items: start; }
.qat { display: flex; height: 47px; padding-left: 22px; }
.doc-title { font-size: 16.800px; line-height: 46px; white-space: nowrap; margin-right: 3px; }
.win { display: flex; height: 46px; justify-content: flex-end; align-items: center; }
.user { font-size: 16.900px; margin-right: 13px; }
.tabs { position: relative; height: 45px; display: flex; align-items: center; }
.tabgrid { display: grid; grid-template-columns: 95px 77px 74px 84px 84px 112px 100px 78px 74px; height: 45px; }
.tab { display: flex; align-items: center; justify-content: center; font-size: 16.200px; }
.tab-file { padding-right: 7px; padding-bottom: 2px; }
.tab-on { background: #f1f1f1; color: #2b579a; padding-right: 3px; }
.tellme { display: flex; align-items: center; gap: 6px; margin-left: 14px; font-size: 17.200px; color: #c4d2e6; }
.share { display: flex; align-items: center; margin-left: auto; padding-right: 24px; }
.share-t { font-size: 16.400px; margin-left: 9px; }
.cmt { margin-left: 30px; }

/* ribbon */
.ribbon { height: 133px; flex: none; background: #f1f1f1; border-bottom: 2px solid #d6d6d6; display: flex; padding-top: 4px; color: #444; position: relative; }
.group { position: relative; flex: none; height: 123px; border-right: 1px solid #d0d0d0; }
.glabel { position: absolute; left: 0; right: 0; bottom: -1px; height: 17px; line-height: 17px; font-size: 15.300px; color: #666; text-align: center; }
.gl-pad { padding-right: 26px; }
.launch { position: absolute; right: 6px; bottom: 4px; width: 8px; height: 8px; border-left: 1px solid #888; border-top: 1px solid #888; }
.launch::after { content: ""; position: absolute; right: 0; bottom: 0; width: 4px; height: 4px; border-right: 1px solid #777; border-bottom: 1px solid #777; }
.g-clip { width: 220px; }
.clip-body { display: flex; }
.paste { width: 66px; display: flex; flex-direction: column; align-items: center; padding-top: 4px; }
.paste-t { font-size: 16.500px; line-height: 20px; margin-top: 3px; }
.clip-list { display: flex; flex-direction: column; }
.cl { display: flex; align-items: center; height: 33px; font-size: 16.500px; white-space: nowrap; }
.cl.off { color: #a6a6a6; }
.cl-i { width: 26px; display: flex; align-items: center; }
.g-font { width: 354px; padding-left: 4px; }
.rows { display: flex; flex-direction: column; gap: 13px; padding-top: 11px; }
.row { display: flex; height: 31px; align-items: center; }
.combo { display: flex; align-items: center; justify-content: space-between; height: 31px; background: #fff; border: 1px solid #c6c6c6; padding: 0 6px 0 5px; font-size: 16.500px; color: #333; }
.c-font { width: 125px; margin-right: 2px; }
.c-size { width: 62px; margin-right: 1px; }
.big { position: relative; font-size: 23px; color: #555; }
.big.sm { font-size: 19px; }
.sup { position: absolute; right: 2px; top: 3px; }
.aa { font-size: 19px; color: #555; }
.fmt { color: #555; font-family: "Liberation Sans", sans-serif; }
.bold { font-family: "Open Sans", sans-serif; font-weight: 700; font-size: 19px; }
.ital { font-family: "Open Sans", sans-serif; font-style: italic; font-weight: 600; font-size: 20px; }
.under { font-family: "Open Sans", sans-serif; font-size: 19px; font-weight: 600; text-decoration: underline; }
.abc { font-family: "Open Sans", sans-serif; font-size: 16px; text-decoration: line-through; }
.xs { font-family: "Open Sans", sans-serif; font-size: 17px; font-weight: 700; }
.xs sub, .xs sup { font-size: 10px; color: #3f78b5; font-weight: 400; }
.fx { font-family: "Open Sans", sans-serif; font-weight: 600; font-size: 22px; color: #fff; -webkit-text-stroke: 1px #3f78b5; }
.colorA { position: relative; font-size: 22px; font-family: "Open Sans", sans-serif; color: #555; }
.colorA::after { content: ""; position: absolute; left: 5px; right: 5px; bottom: 3px; height: 6px; background: #f00; }
.g-para { width: 296px; padding-left: 5px; }
.r-ind { padding-left: 4px; }
.jl { justify-content: flex-start; }
.mini { font: 8px "Liberation Sans", sans-serif; fill: #3f78b5; }
.pil { font-family: "Liberation Sans", sans-serif; font-size: 25px; color: #555; font-weight: 700; }
.g-styles { width: 903px; padding: 3px 0 0 5px; }
.gallery { display: flex; width: 889px; height: 90px; background: #fff; border: 1px solid #ababab; padding-top: 2px; position: relative; }
.style { width: 108px; height: 85px; padding: 6px 7px 0; display: flex; flex-direction: column; align-items: center; flex: none; }
.style.sel { box-shadow: inset 0 0 0 6px #c6c6c6; }
.pv { width: 100%; height: 46px; overflow: hidden; white-space: nowrap; text-align: center; line-height: 46px; font-family: Lato, sans-serif; color: #000; }
.pv-n { font-size: 19.500px; }
.pv-h1 { font-size: 29px; color: #2e74b5; font-weight: 300; text-align: left; padding-left: 2px; }
.pv-h2 { font-size: 23px; color: #2e74b5; font-weight: 300; text-align: left; padding-left: 2px; }
.pv-t { font-size: 51px; font-weight: 300; line-height: 30px; height: 42px; margin-top: 4px; }
.pv-s { font-size: 17px; letter-spacing: 3px; color: #5a5a5a; text-align: left; padding-left: 2px; }
.pv-e1 { font-size: 19.500px; font-style: italic; color: #404040; }
.pv-e2 { font-size: 19.500px; font-style: italic; }
.sl { font-size: 16.400px; color: #666; line-height: 22px; margin-top: 2px; white-space: nowrap; }
.gscroll { position: absolute; right: -1px; top: -1px; width: 22px; height: 90px; display: flex; flex-direction: column; }
.gs { flex: 1; display: flex; align-items: center; justify-content: center; border: 1px solid #d8d8d8; background: #fff; }
.gs-up { background: #e4e4e4; }
.g-edit { width: 108px; }
.edit-list { margin-top: -1px; padding-left: 7px; display: flex; flex-direction: column; }
.ed { display: flex; align-items: center; height: 31px; font-size: 16.500px; }
.ed-i { width: 27px; display: flex; justify-content: center; flex: none; }
.ml-ed1 { margin-left: 14px; }
.ml-ed2 { margin-left: 5px; }
.collapse { position: absolute; left: 1894px; bottom: 5px; }

/* document */
.docarea { flex: 1; min-height: 0; overflow: hidden; display: flex; align-items: flex-start; gap: 13px; padding: 12px 0 0 16px; background: #e6e6e6; position: relative; }
.page { width: 612px; height: 800px; flex: none; background: #fff; border: 1px solid #c6c6c6; border-bottom: 0; position: relative; }
.caret { position: absolute; left: 305px; top: 72px; width: 1px; height: 20px; background: #000; }
.p1 { padding-top: 105px; }
.brand { display: flex; align-items: center; padding-left: 40px; }
.logo { width: 193px; height: 60px; background: #003399; display: flex; flex: none; }
.crest { flex: none; }
.logo-t { display: flex; flex-direction: column; padding: 4px 0 0 4px; color: #fff; font-family: "DejaVu Sans", sans-serif; }
.l-w { font-size: 13px; line-height: 14.500px; letter-spacing: .3px; white-space: nowrap; }
.l-e { font-size: 9px; line-height: 12px; margin-top: 11px; color: #ccd5ea; }
.direct { margin: 4px 0 0 6px; font: 700 20.800px/24px Lato, sans-serif; color: #00008b; white-space: nowrap; }
.cv { text-align: center; font: 700 16px/22px "Liberation Sans", sans-serif; color: #000; }
.cv1 { margin-top: 102px; }
.cv2 { margin-top: 49px; }
.cv3 { margin-top: 34px; }
.cv4 { margin-top: 6px; }
.p2 { padding-top: 71px; font-family: "Liberation Serif", serif; color: #222; }
.p2-title { margin: 0; font: 400 28.100px/34px "Liberation Serif", serif; color: #000; text-align: center; }
.p2-body { padding-left: 71px; }
.finance { margin-top: 9px; font-size: 12px; line-height: 14px; letter-spacing: -.25px; color: #111; }
.scan { filter: blur(.3px); }
.q11 { display: flex; margin-top: 15px; }
.q11n { width: 37px; padding-left: 5px; font-size: 10.500px; line-height: 16px; color: #333; }
.qbox { width: 418px; height: 335px; border: 1px solid #555; padding: 0 4px; flex: none; }
.qtext { width: 408px; font-size: 10.700px; line-height: 12.300px; height: 37px; }
.jline { display: block; white-space: nowrap; text-align: justify; text-align-last: justify; }
.nline { display: block; white-space: nowrap; }
.bill { margin: 10px 0 0 13px; width: 396px; border-collapse: collapse; table-layout: fixed; font: 9.100px/10px "Liberation Sans", sans-serif; color: #222; }
.c1 { width: 39px; } .c2 { width: 101px; } .c3 { width: 57px; } .c4 { width: 44px; } .c5 { width: 44px; } .c6 { width: 111px; }
.bill td { border: 1px solid #222; padding: 0 1px; vertical-align: top; overflow: hidden; white-space: nowrap; }
.bill .ctr { text-align: center; }
.bill td:not(.ctr):not(.mid) { padding-left: 4px; }
.bill .mid { vertical-align: middle; }
.bill .bot { vertical-align: bottom; padding-bottom: 1px; }
.bold-t, .b-h { font-weight: 700; }
.bill-city { padding-left: 20px; }
.shade td { background: #eeeeee; }
.thickl { border-left: 3px solid #8a8a8a !important; border-right: 3px solid #8a8a8a !important; }
.h52 { height: 52px; } .h11 { height: 11px; } .h32 { height: 31px; } .h20 { height: 20px; } .h103 { height: 101px; } .h21 { height: 21px; } .h23 { height: 23px; }
.blank { display: inline-block; width: 63px; height: 9px; border-bottom: 1px solid #222; }
.blankb { display: inline-block; width: 18px; height: 9px; border-bottom: 1px solid #222; }
.bill .c-due { position: relative; font-weight: 700; }
.c-due::after { content: ""; position: absolute; left: 2px; right: 2px; top: 11px; height: 1px; background: #000; }
.qlist { display: grid; grid-template-columns: 44px 341px auto; grid-auto-rows: 24.500px; align-items: center; margin: 7px 0 0 43px; font-size: 10.700px; color: #333; }
.p3 { padding: 71px 0 0 70px; font-family: "Liberation Serif", serif; color: #111; font-size: 11.800px; line-height: 14px; }
.q21 { display: flex; width: 531px; height: 259px; border: 1px dashed #9a9a9a; }
.q21n { width: 47px; padding: 3px 0 0 6px; flex: none; }
.q21box { width: 470px; height: 259px; margin-top: -1px; border: 1px solid #000; padding: 1px 0 0 5px; flex: none; }
.t1 { line-height: 15px; white-space: nowrap; }
.t2 { line-height: 15px; margin-top: 8px; width: 458px; text-align: justify; }
.t3 { line-height: 15px; margin-top: 6px; white-space: nowrap; }
.t3b { margin-left: 18px; }
.sq { text-decoration: underline wavy #e02020 1px; text-underline-offset: 1px; }
.venue { margin: 9px 0 0 1px; border-collapse: collapse; table-layout: fixed; width: 412px; border: 1px solid #000; font-size: 11.800px; line-height: 15px; }
.vc1 { width: 136px; } .vc2 { width: 138px; } .vc3 { width: 138px; }
.venue th, .venue td { border: 1px solid #000; vertical-align: top; text-align: center; padding: 0 2px; }
.vh { height: 39px; }
.vh th { border-top: 2px solid #000; border-bottom: 2px solid #000; }
.vr { height: 23.700px; }
.venue .vl { text-align: left; padding-left: 4px; }
.dr { display: grid; border: 1px dashed #9a9a9a; overflow: hidden; line-height: 14px; }
.dr > span { border-left: 1px dashed #9a9a9a; min-width: 0; }
.dr > span:first-child { border-left: 0; }
.dA { grid-template-columns: 47px 425px 13px 1fr; width: 530px; }
.dB { grid-template-columns: 47px 57px 368px 13px 1fr; width: 525px; margin-left: 1px; }
.dC { grid-template-columns: 45px 58px 369px 13px 1fr; width: 525px; margin-left: 1px; }
.dD { grid-template-columns: 47px 57px 368px 12px 1fr; width: 530px; }
.dE { grid-template-columns: 50px 58px 25px 344px 12px 1fr; width: 534px; margin-left: -4px; }
.dF { grid-template-columns: 45px 58px 369px 13px 1fr; width: 525px; margin-left: 1px; }
.h27 { height: 27px; line-height: 13px; } .h14 { height: 14px; line-height: 12px; } .h83 { height: 83px; } .h13 { height: 13px; line-height: 11px; } .h26 { height: 26px; line-height: 13.500px; }
.mt23 { margin-top: 23px; } .mt11 { margin-top: 11px; } .mt10 { margin-top: 10px; } .mt12 { margin-top: 12px; }
.ptx { padding: 0 2px 0 5px; letter-spacing: -.06px; }
.ptx2 { padding-left: 5px; }
.ptx3 { padding: 0 5px 0 5px; text-align: justify; }
.px { padding-left: 4px; }
.px2 { padding-left: 5px; }
.pa { padding-left: 6px; }
.mk { padding-left: 6px; }
.dr > .mkb { display: flex; align-items: flex-end; }
.spread { display: flex; justify-content: space-between; padding-right: 6px; }
.gap13 { display: inline-block; margin-top: 13px; }
.blu { text-decoration-color: #2b5fd0; }
.vscroll { position: absolute; right: 1px; top: 0; width: 25px; height: 759px; display: flex; flex-direction: column; background: #dcdcdc; }
.vbtn { height: 24px; display: flex; align-items: center; justify-content: center; background: #fff; border: 1px solid #ababab; flex: none; }
.vthumb { height: 95px; margin-top: 1px; background: #fff; border: 1px solid #ababab; flex: none; }
.vtrack { flex: 1; }
.vscroll .vbtn:last-child { height: 22px; border-color: #d0d0d0; background: #f4f4f4; }

/* status bar */
.status { height: 33px; flex: none; background: #f1f1f1; border-top: 1px solid #c6c6c6; display: flex; justify-content: space-between; align-items: center; padding-left: 7px; color: #555; }
.st-text { font-size: 14.850px; white-space: nowrap; margin-bottom: 2px; }
.st-right { display: flex; height: 32px; align-items: center; }
.v-btn { width: 45px; }
.v-read { margin-left: 1px; }
.zm { width: 24px; }
.slider { width: 148px; height: 2px; background: #a6a6a6; position: relative; }
.thumb { position: absolute; left: 31px; top: -7px; width: 6px; height: 16px; background: #666; }
.tick { position: absolute; left: 73px; top: -3px; width: 1px; height: 8px; background: #888; }
.pct { font-size: 15.500px; margin: 0 16px 0 14px; color: #555; }

/* taskbar */
.taskbar { height: 60px; flex: none; background: #050a2c; display: flex; justify-content: space-between; color: #fff; position: relative; }
.tb-left { display: flex; position: relative; }
.tk { width: 75px; display: flex; align-items: center; justify-content: center; height: 60px; flex: none; }
.tk:first-child { width: 69.500px; }
.tk-word { background: #343a52; border-right: 6px solid #2a2f49; padding-left: 4px; }
.ul { position: absolute; bottom: 0; height: 3px; background: #76b9ed; }
.ul-a { left: 377px; width: 61px; } .ul-b { left: 602px; width: 68px; } .ul-c { left: 670px; width: 74px; } .ul-d { left: 827px; width: 61px; } .ul-e { left: 902px; width: 61px; }
.tray { display: flex; align-items: center; height: 60px; }
.tr { display: flex; justify-content: center; align-items: center; }
.w-people { width: 32px; } .w-chev { width: 34px; margin-left: 20px; } .w-shield { width: 34px; margin-left: 2px; } .w-bat { width: 38px; } .w-wifi { width: 38px; } .w-vol { width: 30px; }
.clock { width: 100px; margin-left: 5px; display: flex; flex-direction: column; align-items: center; font-size: 18px; line-height: 28px; }
.action { position: relative; width: 44px; height: 40px; margin-left: 19px; margin-right: 11px; padding-top: 2px; }
.badge { position: absolute; left: 12px; top: 12px; width: 24px; height: 24px; border-radius: 50%; background: #3a3d52; border: 1px solid #777; font-size: 15px; line-height: 22px; text-align: center; }
.showdesk { width: 1px; height: 60px; background: #666; margin-right: 7px; }
```
